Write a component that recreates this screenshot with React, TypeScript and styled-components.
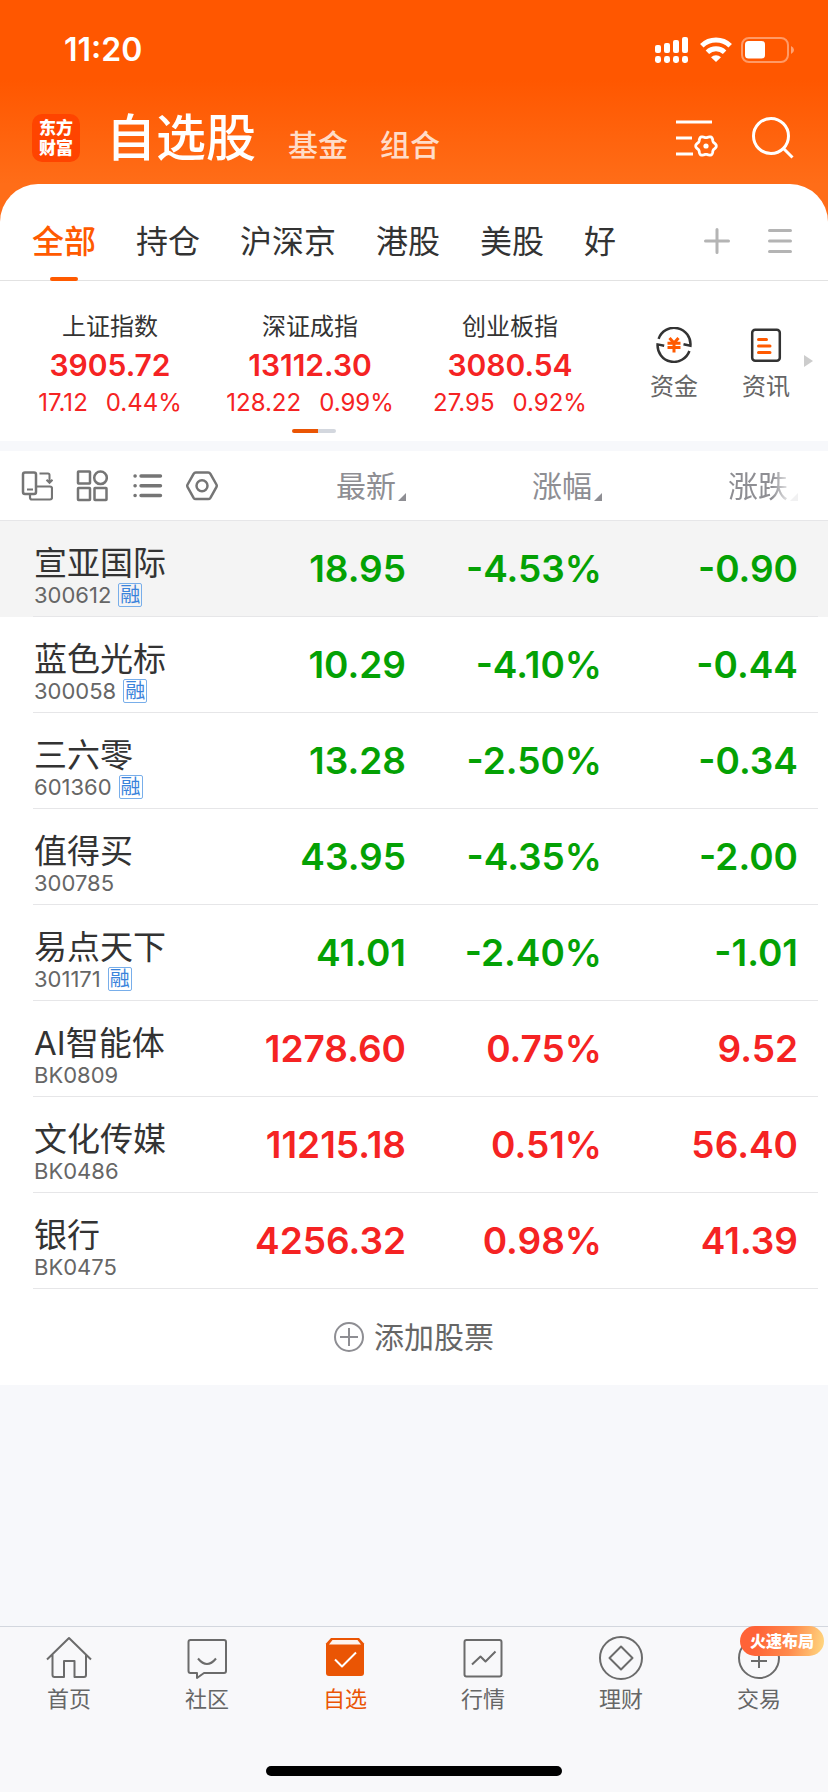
import React from "react";
import styled, { createGlobalStyle, css } from "styled-components";

const color = {
  orange: "#ff5a00",
  deepOrange: "#ea5504",
  red: "#f52323",
  green: "#04a104",
  ink: "#333333",
  mid: "#666666",
  soft: "#8e8e93",
  line: "#e6e6e8",
  band: "#f7f8fb",
};

const GlobalStyle = createGlobalStyle`
  *, *::before, *::after { box-sizing: border-box; }
  body {
    margin: 0;
    background: ${color.band};
    color: ${color.ink};
    font-family: Inter, "Noto Sans CJK SC", sans-serif;
  }
  button { font: inherit; color: inherit; background: none; border: 0; padding: 0; cursor: pointer; }
  a { color: inherit; text-decoration: none; }
  svg { display: block; flex: none; }
`;

const Page = styled.div`
  display: flex;
  flex-direction: column;
  min-height: 100vh;
`;

const Header = styled.header`
  padding-bottom: 40px;
  background: linear-gradient(#ff5700 80px, #ff6d18 184px);
  color: #fff;
`;

const StatusBar = styled.div`
  display: flex;
  align-items: center;
  justify-content: space-between;
  height: 100px;
  padding: 0 34px 0 64px;
  font-size: 32px;
  font-weight: 600;
  line-height: 40px;
`;

const StatusIcons = styled.div`
  display: flex;
  align-items: center;
  gap: 9px;
`;

const NavRow = styled.div`
  display: flex;
  align-items: center;
  height: 84px;
  padding: 0 34px 8px 32px;
`;

const Logo = styled.a`
  display: grid;
  align-content: center;
  justify-content: center;
  width: 48px;
  height: 48px;
  border-radius: 10px;
  background: #ff4400;
  font-size: 17px;
  font-weight: 900;
  line-height: 20px;
`;

const Sections = styled.nav`
  display: flex;
  flex: 1;
  align-items: baseline;
  gap: 32px;
  margin-left: 26px;
  padding-top: 6px;
`;

const SectionLink = styled.a<{ $active?: boolean }>`
  font-size: ${(p) => (p.$active ? 50 : 30)}px;
  line-height: 56px;
  font-weight: 500;
  color: ${(p) => (p.$active ? "#fff" : "#ffdcc8")};
`;

const NavIcons = styled.div`
  display: flex;
  align-items: center;
  gap: 34px;
`;

const Sheet = styled.main`
  display: flex;
  flex: 1;
  flex-direction: column;
  margin-top: -40px;
`;

const Tabs = styled.nav`
  display: flex;
  align-items: stretch;
  height: 97px;
  padding: 0 36px 0 32px;
  border-bottom: 1px solid #e2e2e2;
  border-radius: 38px 38px 0 0;
  background: #fff;
`;

const TabList = styled.div`
  display: flex;
  flex: 1;
  gap: 40px;
`;

const Tab = styled.button<{ $active?: boolean }>`
  position: relative;
  padding-top: 20px;
  font-size: 32px;
  line-height: 40px;
  white-space: nowrap;
  ${(p) =>
    p.$active &&
    css`
      color: ${color.orange};
      font-weight: 500;
      &::after {
        content: "";
        position: absolute;
        left: 50%;
        bottom: -1px;
        width: 28px;
        height: 4px;
        margin-left: -14px;
        border-radius: 2px;
        background: ${color.orange};
      }
    `}
`;

const TabTools = styled.div`
  display: flex;
  align-items: center;
  gap: 38px;
  padding-top: 17px;
`;

const Market = styled.section`
  display: flex;
  height: 160px;
  padding-right: 14px;
  background: #fff;
`;

const IndexPager = styled.div`
  display: flex;
  flex: 1;
  flex-direction: column;
  align-items: center;
`;

const IndexRow = styled.div`
  display: grid;
  grid-template-columns: repeat(3, 1fr);
  width: 100%;
  padding: 28px 18px 0 10px;
`;

const IndexCard = styled.button`
  display: flex;
  flex-direction: column;
  align-items: center;
  height: 120px;
`;

const IndexName = styled.span`
  font-size: 24px;
  line-height: 36px;
`;

const IndexValue = styled.span`
  font-size: 30px;
  font-weight: 600;
  line-height: 40px;
  color: ${color.red};
`;

const IndexChange = styled.span`
  display: flex;
  gap: 18px;
  font-size: 24px;
  line-height: 36px;
  color: ${color.red};
`;

const PagerBar = styled.div`
  width: 44px;
  height: 4px;
  border-radius: 2px;
  background: linear-gradient(to right, ${color.deepOrange} 26px, #d3d7de 26px);
`;

const Shortcuts = styled.div`
  display: flex;
  align-items: center;
  width: 186px;
`;

const Shortcut = styled.a`
  display: flex;
  flex-direction: column;
  align-items: center;
  width: 92px;
  padding-top: 9px;
  font-size: 24px;
  line-height: 36px;
  color: ${color.mid};
  gap: 6px;
`;

const More = styled.span`
  flex: none;
  width: 0;
  border: 6px solid transparent;
  border-left: 9px solid #ccc;
  border-right: 0;
  margin-left: -8px;
`;

const Quotes = styled.table`
  width: 100%;
  border-top: 10px solid ${color.band};
  border-spacing: 0;
  table-layout: fixed;
  background: #fff;
`;

const HeadRow = styled.tr`
  height: 70px;
`;

const HeadCell = styled.th<{ $width?: number; $last?: boolean }>`
  width: ${(p) => (p.$width ? `${p.$width}px` : "auto")};
  padding: 0 ${(p) => (p.$last ? 30 : 0)}px 0 0;
  border-bottom: 1px solid ${color.line};
  font-weight: 400;
  text-align: right;
`;

const ViewTools = styled.div`
  display: flex;
  gap: 23px;
  padding-left: 21px;
`;

const SortButton = styled.button<{ $faded?: boolean }>`
  display: inline-flex;
  align-items: flex-end;
  gap: 2px;
  font-size: 30px;
  line-height: 40px;
  color: ${color.soft};
  white-space: nowrap;
  &::after {
    content: "";
    margin-bottom: 5px;
    border: 4px solid ${color.soft};
    border-top-color: transparent;
    border-left-color: transparent;
  }
  ${(p) =>
    p.$faded &&
    css`
      mask-image: linear-gradient(to right, #000 44px, rgba(0, 0, 0, 0.12) 62px);
    `}
`;

const QuoteRow = styled.tr<{ $pinned?: boolean }>`
  height: 96px;
  background: linear-gradient(${color.line}, ${color.line}) 33px 100% / calc(100% - 43px) 1px no-repeat
    ${(p) => (p.$pinned ? "#f4f4f4" : "#fff")};
`;

const NameCell = styled.th`
  padding: 0 0 0 34px;
  font-weight: 400;
  text-align: left;
  white-space: nowrap;
`;

const StockName = styled.div`
  padding-top: 12px;
  font-size: 33px;
  line-height: 40px;
`;

const StockMeta = styled.div`
  display: flex;
  align-items: center;
  gap: 7px;
  height: 24px;
  font-size: 22px;
  line-height: 24px;
  color: ${color.mid};
`;

const MarginBadge = styled.span`
  display: grid;
  place-items: center;
  width: 24px;
  height: 24px;
  border: 1px solid #78aeea;
  border-radius: 2px;
  font-size: 20px;
  line-height: 22px;
  color: #3a83db;
`;

const NumberCell = styled.td<{ $up: boolean; $last?: boolean }>`
  padding: 0 ${(p) => (p.$last ? 30 : 0)}px 0 0;
  font-size: 37px;
  font-weight: 600;
  line-height: 48px;
  text-align: right;
  white-space: nowrap;
  color: ${(p) => (p.$up ? color.red : color.green)};
`;

const AddStock = styled.button`
  display: flex;
  align-items: center;
  justify-content: center;
  gap: 10px;
  height: 96px;
  background: #fff;
  font-size: 30px;
  line-height: 40px;
  color: ${color.mid};
`;

const BottomBar = styled.footer`
  height: 166px;
  padding-top: 7px;
  border-top: 1px solid #d3d7de;
  background: #f8f8fa;
`;

const BottomNav = styled.nav`
  display: grid;
  grid-template-columns: repeat(6, 1fr);
`;

const NavItem = styled.a<{ $active?: boolean }>`
  position: relative;
  display: flex;
  flex-direction: column;
  align-items: center;
  gap: 2px;
  font-size: 22px;
  line-height: 30px;
  color: ${(p) => (p.$active ? color.deepOrange : color.mid)};
`;

const Promo = styled.span`
  position: absolute;
  top: -8px;
  right: 4px;
  width: 84px;
  height: 30px;
  border-radius: 15px;
  background: linear-gradient(100deg, #ff6337 20%, #ff8a4c 60%, #ffd27c 96%);
  font-size: 16px;
  font-weight: 900;
  line-height: 30px;
  text-align: center;
  color: #fff;
`;

const HomeIndicator = styled.div`
  width: 296px;
  height: 10px;
  margin: 52px auto 0;
  border-radius: 5px;
  background: #000;
`;

const Signal = () => (
  <svg width="36" height="26" viewBox="0 0 36 26" fill="#fff">
    <rect x="0" y="8" width="6" height="8" rx="2" />
    <rect x="9" y="6" width="6" height="10" rx="2" />
    <rect x="18" y="3" width="6" height="13" rx="2" />
    <rect x="27" y="0" width="6" height="16" rx="2" />
    {[0, 9, 18, 27].map((x) => (
      <rect key={x} x={x} y="19" width="6" height="7" rx="2.4" />
    ))}
  </svg>
);

const Wifi = () => (
  <svg width="32" height="26" viewBox="0 0 32 26">
    <g fill="none" stroke="#fff" strokeWidth="5">
      <path d="M1.8 8.8a20.4 20.4 0 0 1 28.4 0" />
      <path d="M7.4 15.2a12.4 12.4 0 0 1 17.2 0" />
    </g>
    <path d="M11 20.2a7.4 7.4 0 0 1 10 0L16 25Z" fill="#fff" />
  </svg>
);

const Battery = () => (
  <svg width="53" height="26" viewBox="0 0 53 26">
    <rect x="1" y="1" width="46" height="24" rx="7" fill="none" stroke="#fff" strokeOpacity=".4" strokeWidth="2" />
    <rect x="4" y="4" width="20" height="17.5" rx="3.5" fill="#fff" />
    <path d="M50 9q3 1.4 3 4t-3 4Z" fill="#fff" fillOpacity=".45" />
  </svg>
);

const gearPath = (cx: number, cy: number) => {
  const points = Array.from({ length: 72 }, (_, i) => {
    const angle = (i * Math.PI) / 36;
    const r = 9.3 + Math.cos(6 * angle);
    return `${(cx + r * Math.cos(angle)).toFixed(2)} ${(cy + r * Math.sin(angle)).toFixed(2)}`;
  });
  return `M${points.join("L")}Z`;
};

const ListSettingsIcon = () => (
  <svg width="42" height="42" viewBox="0 0 42 42" fill="none" stroke="#fff" strokeWidth="3">
    <path d="M0 5h36M0 21h16M0 37h17" />
    <path d={gearPath(30, 29)} strokeWidth="2.8" />
    <circle cx="30" cy="29" r="2.6" fill="#fff" stroke="none" />
  </svg>
);

const SearchIcon = () => (
  <svg width="42" height="42" viewBox="0 0 42 42" fill="none" stroke="#fff" strokeWidth="3">
    <circle cx="19" cy="19" r="17.5" />
    <path d="M31.5 31.5l9 9" />
  </svg>
);

const PlusIcon = () => (
  <svg width="26" height="26" viewBox="0 0 26 26" stroke="#b4b4b4" strokeWidth="3" strokeLinecap="round">
    <path d="M1.5 13h23M13 1.5v23" />
  </svg>
);

const MenuIcon = () => (
  <svg width="24" height="26" viewBox="0 0 24 26" stroke="#b4b4b4" strokeWidth="3" strokeLinecap="round">
    <path d="M1.5 2.5h21M1.5 13h21M1.5 23.5h21" />
  </svg>
);

const FundIcon = () => (
  <svg width="36" height="36" viewBox="0 0 36 36" fill="none" stroke={color.ink} strokeWidth="2.5">
    <path d="M2.6 11.8A16.4 16.4 0 0 1 34.4 18.8L27.5 17.2" />
    <path d="M33.4 24A16.4 16.4 0 0 1 1.6 17.4L8.2 18.8" />
    <path d="M13.5 11l4.5 5 4.5-5M11.5 16.2h13M11.5 20.6h13M18 16v9.5" stroke={color.orange} strokeWidth="3" />
  </svg>
);

const NewsIcon = () => (
  <svg width="36" height="36" viewBox="0 0 36 36" fill="none" strokeWidth="2.5">
    <rect x="4.2" y="2.8" width="27.6" height="31" rx="3" stroke={color.ink} />
    <path d="M10.5 12.5h8M10.5 19h11.5M10.5 25.5h11.5" stroke={color.orange} strokeWidth="3" strokeLinecap="round" />
  </svg>
);

const toolProps = {
  width: 32,
  height: 32,
  viewBox: "0 0 32 32",
  fill: "none",
  stroke: "#757575",
  strokeWidth: 2.5,
};

const RotateViewIcon = () => (
  <svg {...toolProps}>
    <rect x="2" y="2.5" width="13" height="21.5" rx="2" />
    <path d="M6 19.5h6" strokeWidth="2" />
    <path d="M18.5 3.5h8.5a1.5 1.5 0 0 1 1.5 1.5v7M25.5 9.8l3 3 3-3" strokeWidth="2" />
    <path d="M16 16.5h13a2 2 0 0 1 2 2v9a2 2 0 0 1-2 2H11a2 2 0 0 1-2-2V25" strokeWidth="2.2" />
  </svg>
);

const GridIcon = () => (
  <svg {...toolProps}>
    <rect x="2" y="1.5" width="12" height="12" rx=".5" />
    <circle cx="24.5" cy="7.8" r="6.3" />
    <rect x="2" y="18" width="12" height="12" rx=".5" />
    <rect x="18.5" y="18" width="12" height="12" rx=".5" />
  </svg>
);

const ListIcon = () => (
  <svg {...toolProps} strokeWidth={3.4} strokeLinecap="round">
    <path d="M10 6h19.500M10 15.800h19.500M10 25.500h19.500M4 6h.2M4 15.800h.2M4 25.500h.2" />
  </svg>
);

const HexIcon = () => (
  <svg {...toolProps} strokeLinejoin="round">
    <path d="M9.8 2.5h12.4q1.4 0 2.2 1.3l6 10.7q.7 1.3 0 2.6l-6 10.7q-.8 1.3-2.2 1.3H9.8q-1.4 0-2.2-1.3l-6-10.7q-.7-1.3 0-2.6l6-10.7q.8-1.3 2.2-1.3Z" />
    <circle cx="16" cy="15.8" r="5.5" />
  </svg>
);

const AddIcon = () => (
  <svg width="30" height="30" viewBox="0 0 30 30" fill="none" stroke={color.soft} strokeWidth="2">
    <circle cx="15" cy="15" r="14" />
    <path d="M6 15h18M15 6v18" />
  </svg>
);

const tabIconProps = {
  width: 48,
  height: 48,
  viewBox: "0 0 48 48",
  fill: "none",
  stroke: "#6b6b6b",
  strokeWidth: 2,
  strokeLinejoin: "round" as const,
};

const HomeIcon = () => (
  <svg {...tabIconProps}>
    <path d="M2 25.5L24 4l22 21.5M7.5 20.5V41a2 2 0 0 0 2 2H19V27h10.5v16H39a2 2 0 0 0 2-2V20.5" />
  </svg>
);

const CommunityIcon = () => (
  <svg {...tabIconProps}>
    <path d="M7.5 6h33.5a2 2 0 0 1 2 2v29a2 2 0 0 1-2 2H21l-7 5V39H7.5a2 2 0 0 1-2-2V8a2 2 0 0 1 2-2Z" />
    <path d="M15 24.500q9 11 18 0" />
  </svg>
);

const WatchlistIcon = () => (
  <svg {...tabIconProps} stroke="none">
    <path d="M10 4h28l5 5.5V39a3 3 0 0 1-3 3H8a3 3 0 0 1-3-3V9.5Z" fill={color.deepOrange} />
    <path d="M11.5 6h25l3.5 4.5H8Z" fill="#fdf3ee" />
    <path d="M14 25.5l7 7L35 18.5" stroke="#fff" strokeWidth="2" />
  </svg>
);

const MarketIcon = () => (
  <svg {...tabIconProps}>
    <rect x="5.5" y="6" width="37" height="36.5" rx="2" />
    <path d="M13 30.5l8.5-8 5 5L36.5 17.5" />
  </svg>
);

const WealthIcon = () => (
  <svg {...tabIconProps}>
    <circle cx="24" cy="24" r="21" />
    <path d="M24 12.5L35.5 24 24 35.5 12.5 24Z" />
  </svg>
);

const TradeIcon = () => (
  <svg {...tabIconProps}>
    <circle cx="24" cy="24" r="20" />
    <path d="M16 27h16M24 16v18" />
  </svg>
);

const tabs = ["全部", "持仓", "沪深京", "港股", "美股", "好"];

const indices = [
  { name: "上证指数", value: "3905.72", diff: "17.12", pct: "0.44%" },
  { name: "深证成指", value: "13112.30", diff: "128.22", pct: "0.99%" },
  { name: "创业板指", value: "3080.54", diff: "27.95", pct: "0.92%" },
];

const stocks = [
  { name: "宣亚国际", code: "300612", margin: true, price: "18.95", pct: "-4.53%", diff: "-0.90" },
  { name: "蓝色光标", code: "300058", margin: true, price: "10.29", pct: "-4.10%", diff: "-0.44" },
  { name: "三六零", code: "601360", margin: true, price: "13.28", pct: "-2.50%", diff: "-0.34" },
  { name: "值得买", code: "300785", margin: false, price: "43.95", pct: "-4.35%", diff: "-2.00" },
  { name: "易点天下", code: "301171", margin: true, price: "41.01", pct: "-2.40%", diff: "-1.01" },
  { name: "AI智能体", code: "BK0809", margin: false, price: "1278.60", pct: "0.75%", diff: "9.52" },
  { name: "文化传媒", code: "BK0486", margin: false, price: "11215.18", pct: "0.51%", diff: "56.40" },
  { name: "银行", code: "BK0475", margin: false, price: "4256.32", pct: "0.98%", diff: "41.39" },
];

const bottomItems = [
  { label: "首页", Icon: HomeIcon },
  { label: "社区", Icon: CommunityIcon },
  { label: "自选", Icon: WatchlistIcon, active: true },
  { label: "行情", Icon: MarketIcon },
  { label: "理财", Icon: WealthIcon },
  { label: "交易", Icon: TradeIcon, promo: "火速布局" },
];

export default function App() {
  return (
    <Page>
      <GlobalStyle />
      <Header>
        <StatusBar>
          <span>11:20</span>
          <StatusIcons>
            <Signal />
            <Wifi />
            <Battery />
          </StatusIcons>
        </StatusBar>
        <NavRow>
          <Logo href="#">
            <span>东方</span>
            <span>财富</span>
          </Logo>
          <Sections>
            <SectionLink href="#" $active>自选股</SectionLink>
            <SectionLink href="#">基金</SectionLink>
            <SectionLink href="#">组合</SectionLink>
          </Sections>
          <NavIcons>
            <button aria-label="设置"><ListSettingsIcon /></button>
            <button aria-label="搜索"><SearchIcon /></button>
          </NavIcons>
        </NavRow>
      </Header>

      <Sheet>
        <Tabs>
          <TabList>
            {tabs.map((label, i) => (
              <Tab key={label} $active={i === 0}>{label}</Tab>
            ))}
          </TabList>
          <TabTools>
            <button aria-label="新建分组"><PlusIcon /></button>
            <button aria-label="分组管理"><MenuIcon /></button>
          </TabTools>
        </Tabs>

        <Market>
          <IndexPager>
            <IndexRow>
              {indices.map((item) => (
                <IndexCard key={item.name}>
                  <IndexName>{item.name}</IndexName>
                  <IndexValue>{item.value}</IndexValue>
                  <IndexChange>
                    <span>{item.diff}</span>
                    <span>{item.pct}</span>
                  </IndexChange>
                </IndexCard>
              ))}
            </IndexRow>
            <PagerBar />
          </IndexPager>
          <Shortcuts>
            <Shortcut href="#"><FundIcon />资金</Shortcut>
            <Shortcut href="#"><NewsIcon />资讯</Shortcut>
            <More />
          </Shortcuts>
        </Market>

        <Quotes>
          <thead>
            <HeadRow>
              <HeadCell>
                <ViewTools>
                  <button aria-label="横屏"><RotateViewIcon /></button>
                  <button aria-label="宫格"><GridIcon /></button>
                  <button aria-label="列表"><ListIcon /></button>
                  <button aria-label="列表设置"><HexIcon /></button>
                </ViewTools>
              </HeadCell>
              <HeadCell $width={156}><SortButton>最新</SortButton></HeadCell>
              <HeadCell $width={196}><SortButton>涨幅</SortButton></HeadCell>
              <HeadCell $width={226} $last><SortButton $faded>涨跌</SortButton></HeadCell>
            </HeadRow>
          </thead>
          <tbody>
            {stocks.map((s, i) => {
              const up = !s.diff.startsWith("-");
              return (
                <QuoteRow key={s.code} $pinned={i === 0}>
                  <NameCell scope="row">
                    <StockName>{s.name}</StockName>
                    <StockMeta>
                      {s.code}
                      {s.margin && <MarginBadge>融</MarginBadge>}
                    </StockMeta>
                  </NameCell>
                  <NumberCell $up={up}>{s.price}</NumberCell>
                  <NumberCell $up={up}>{s.pct}</NumberCell>
                  <NumberCell $up={up} $last>{s.diff}</NumberCell>
                </QuoteRow>
              );
            })}
          </tbody>
        </Quotes>

        <AddStock>
          <AddIcon />
          添加股票
        </AddStock>
      </Sheet>

      <BottomBar>
        <BottomNav>
          {bottomItems.map(({ label, Icon, active, promo }) => (
            <NavItem key={label} href="#" $active={active}>
              <Icon />
              {label}
              {promo && <Promo>{promo}</Promo>}
            </NavItem>
          ))}
        </BottomNav>
        <HomeIndicator />
      </BottomBar>
    </Page>
  );
}
